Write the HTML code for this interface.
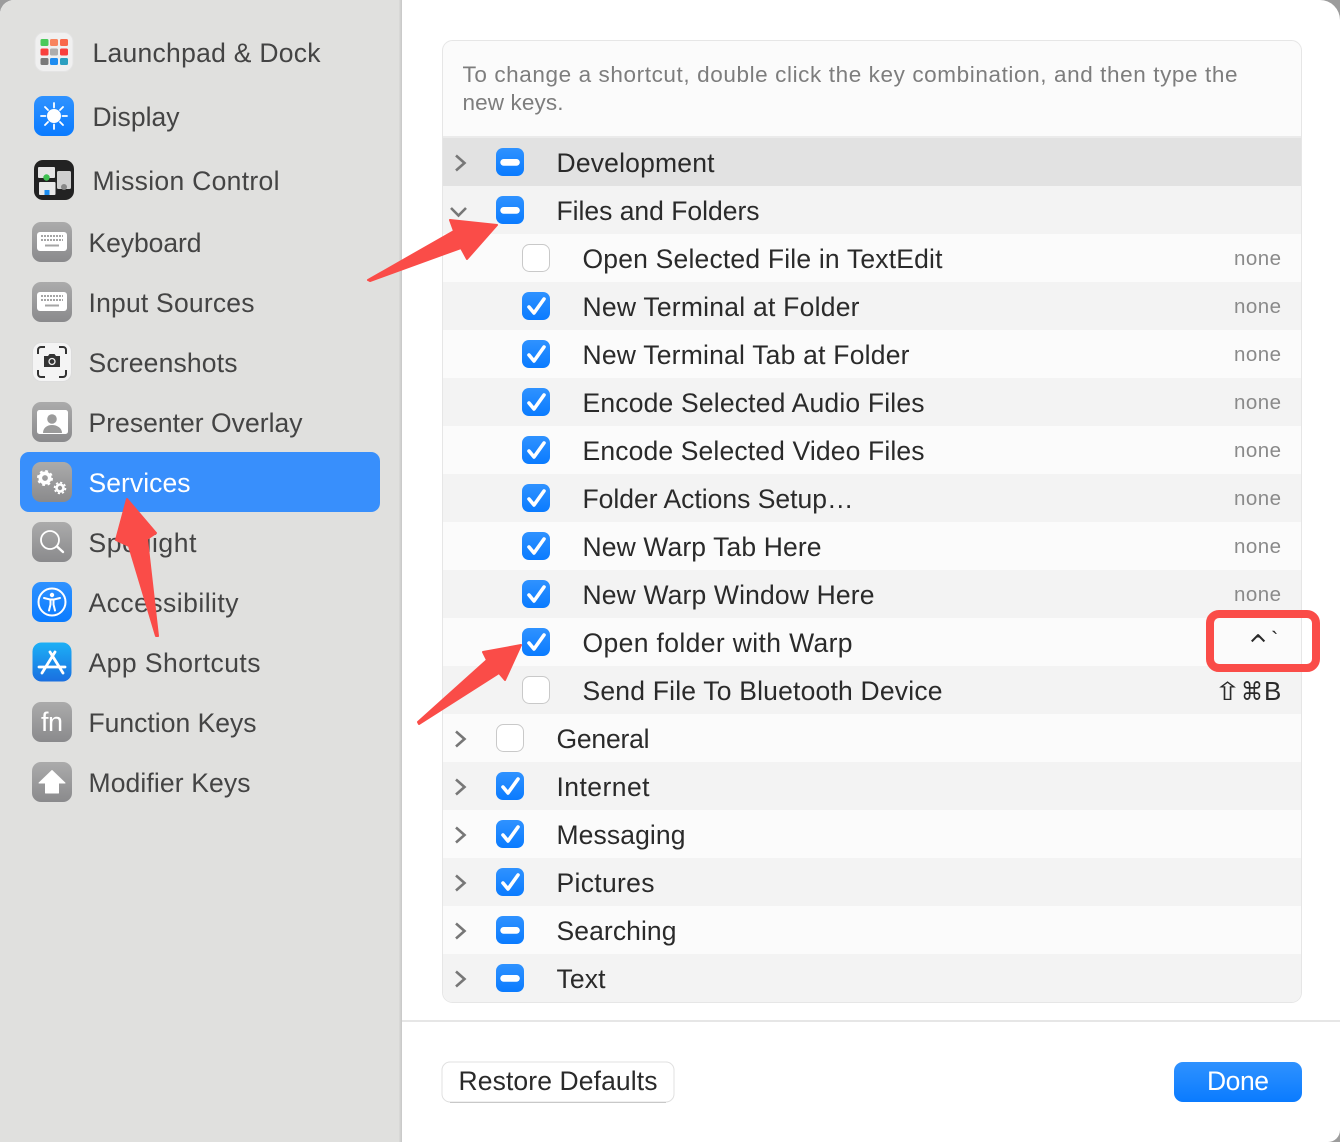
<!DOCTYPE html>
<html><head><meta charset="utf-8"><style>
html,body{margin:0;padding:0;background:#fff;width:1340px;height:1142px;overflow:hidden}
svg{display:block}
text{font-family:"Liberation Sans",sans-serif}
.s{font-size:26.5px;fill:#444}
.r{font-size:26.5px;fill:#2a2a2a}
.n{font-size:20.5px;fill:#8a8a8a}
.h{font-size:22.5px;fill:#7d7d7d}
</style></head><body>
<svg width="1340" height="1142" viewBox="0 0 1340 1142" xmlns="http://www.w3.org/2000/svg">
<defs>
<linearGradient id="b" x1="0" y1="0" x2="0" y2="1"><stop offset="0" stop-color="#2f92ff"/><stop offset="1" stop-color="#0a7bff"/></linearGradient>
<linearGradient id="g" x1="0" y1="0" x2="0" y2="1"><stop offset="0" stop-color="#ababab"/><stop offset="1" stop-color="#8a8a8c"/></linearGradient>
<linearGradient id="a" x1="0" y1="0" x2="0" y2="1"><stop offset="0" stop-color="#1cb0f6"/><stop offset="1" stop-color="#1a6fe0"/></linearGradient>
<linearGradient id="e" x1="0" y1="0" x2="1" y2="0"><stop offset="0" stop-color="#dcdcda"/><stop offset="1" stop-color="#c6c6c6"/></linearGradient>
<g id="cm"><rect width="28" height="28" rx="7" fill="url(#b)"/><rect x="4.300" y="11" width="19.500" height="6.700" rx="3.300" fill="#fff"/></g>
<g id="ck"><rect width="28" height="28" rx="7" fill="url(#b)"/><path d="M7 15l5 6 10-14" fill="none" stroke="#fff" stroke-width="3.600" stroke-linecap="round" stroke-linejoin="round"/></g>
<g id="ce"><rect x=".5" y=".5" width="27" height="27" rx="7" fill="#fff" stroke="#c9c9c9"/></g>
<path id="cr" d="M-4-7.500L4.500 0-4 7.500" fill="none" stroke="#777" stroke-width="2.600"/>
<g id="kb"><rect width="40" height="40" rx="9" fill="url(#g)"/><rect x="5" y="10" width="30" height="19" rx="3" fill="#fff"/><path d="M9 14h22M9 18h22" stroke="#a5a5a5" stroke-width="2" stroke-dasharray="2 1"/><path d="M13 23.500h14" stroke="#a5a5a5" stroke-width="2"/></g>
</defs>

<rect width="1340" height="1142" fill="#9c9c9c"/>
<path d="M14 0H1320A20 20 0 0 1 1340 20V1130A12 12 0 0 1 1328 1142H0V14A14 14 0 0 1 14 0Z" fill="#fff"/>
<path d="M14 0H402V1142H0V14A14 14 0 0 1 14 0Z" fill="#e0e0de"/>
<rect x="399" y="0" width="3" height="1142" fill="url(#e)"/>

<rect x="20" y="452" width="360" height="60" rx="9" fill="#388ffc"/>

<!-- launchpad -->
<rect x="35" y="32.500" width="38" height="39" rx="9" fill="#f0f0f0" stroke="#e4e4e4"/>
<rect x="40.500" y="39" width="8" height="7" rx="1.500" fill="#49c95a"/><rect x="50" y="39" width="8" height="7" rx="1.500" fill="#f8845f"/><rect x="60" y="39" width="8" height="7" rx="1.500" fill="#f9674a"/>
<rect x="40.500" y="48.500" width="8" height="7" rx="1.500" fill="#f9403d"/><rect x="50" y="48.500" width="8" height="7" rx="1.500" fill="#adadad"/><rect x="60" y="48.500" width="8" height="7" rx="1.500" fill="#f9403d"/>
<rect x="40.500" y="58" width="8" height="7" rx="1.500" fill="#7a7a7a"/><rect x="50" y="58" width="8" height="7" rx="1.500" fill="#1e8cf0"/><rect x="60" y="58" width="8" height="7" rx="1.500" fill="#2b9fc0"/>
<!-- display -->
<rect x="34" y="96" width="40" height="40" rx="9" fill="url(#b)"/>
<circle cx="54" cy="116" r="7" fill="#fff"/>
<path d="M54 103v4.500M54 124.500v4.500M41 116h4.500M62.500 116h4.500M45 107l3 3M60 122l3 3M45 125l3-3M60 110l3-3" stroke="#fff" stroke-width="1.800" stroke-linecap="round"/>
<!-- mission -->
<rect x="34" y="160" width="40" height="40" rx="9" fill="#222"/>
<rect x="38" y="167" width="17" height="11" rx="1" fill="#e4e4e4"/><rect x="39" y="182" width="16.500" height="13" rx="1" fill="#e8e8e8"/><rect x="57" y="171" width="14" height="18" rx="1.500" fill="#cfcfcf"/>
<circle cx="46.500" cy="177.500" r="3.200" fill="#3fc152"/><rect x="44.500" y="190" width="5" height="5" fill="#1a8cf0"/><circle cx="64" cy="187" r="3" fill="#888"/>
<!-- keyboards -->
<use href="#kb" x="32" y="222"/>
<use href="#kb" x="32" y="282"/>
<!-- screenshots -->
<rect x="32.500" y="342.500" width="39" height="39" rx="9" fill="#f4f4f4" stroke="#dcdcdc"/>
<path d="M38 354v-4a3 3 0 0 1 3-3h4M59 347h4a3 3 0 0 1 3 3v4M66 370v4a3 3 0 0 1-3 3h-4M45 377h-4a3 3 0 0 1-3-3v-4" fill="none" stroke="#333" stroke-width="2"/>
<path d="M44 356h4l1.500-2h5l1.500 2h4v11H44z" fill="#333"/><circle cx="52" cy="361.500" r="3" fill="none" stroke="#eee" stroke-width="1.300"/>
<!-- presenter -->
<rect x="32" y="402" width="40" height="40" rx="9" fill="url(#g)"/>
<rect x="37" y="410" width="31" height="24" rx="2.500" fill="#fff"/>
<circle cx="52" cy="419" r="4.800" fill="#9b9b9b"/><path d="M43 433c0-5 4-8 9-8s10 3 10 8z" fill="#9b9b9b"/>
<!-- services -->
<rect x="32" y="462" width="40" height="40" rx="9" fill="url(#g)"/>
<g fill="none" stroke="#fff">
<circle cx="45" cy="478" r="4.700" stroke-width="3.600"/><circle cx="45" cy="478" r="7" stroke-width="2" stroke-dasharray="2.800 2.700"/>
<circle cx="60" cy="488" r="3.500" stroke-width="2.600"/><circle cx="60" cy="488" r="5.500" stroke-width="1.600" stroke-dasharray="2.200 2.100"/>
</g>
<!-- spotlight -->
<rect x="32" y="522" width="40" height="40" rx="9" fill="url(#g)"/>
<circle cx="50" cy="540" r="9" fill="none" stroke="#fff" stroke-width="1.800"/><path d="M57 546.500l6 5.500" stroke="#fff" stroke-width="2.400" stroke-linecap="round"/>
<!-- accessibility -->
<rect x="32" y="582" width="40" height="40" rx="9" fill="url(#b)"/>
<circle cx="52" cy="602" r="13.500" fill="none" stroke="#fff" stroke-width="2"/>
<circle cx="52" cy="595" r="2.200" fill="#fff"/><path d="M44 598l6 1.500h4l6-1.500M50.500 599.500v5l-1.500 6M53.500 599.500v5l1.500 6" fill="none" stroke="#fff" stroke-width="2" stroke-linecap="round"/>
<!-- app store -->
<rect x="32.500" y="642.500" width="39" height="39" rx="9" fill="url(#a)"/>
<path d="M50 652l13 21M55 652l-13 21M39 667h26" stroke="#fff" stroke-width="2.800" stroke-linecap="round"/>
<!-- fn -->
<rect x="32" y="702" width="40" height="40" rx="9" fill="url(#g)"/>
<text x="41" y="731" font-size="27" fill="#fff" textLength="22" lengthAdjust="spacing">fn</text>
<!-- modifier -->
<rect x="32" y="762" width="40" height="40" rx="9" fill="url(#g)"/>
<path d="M52 770.500L65 783H58.500V793H45.500V783H39Z" fill="#fff" stroke="#fff" stroke-linejoin="round"/>

<!-- list panel -->
<rect x="442.500" y="40.500" width="859" height="962" rx="10" fill="#fbfbfb" stroke="#e6e6e6"/>
<rect x="443" y="136" width="858" height="2" fill="#ebebeb"/>
<rect x="443" y="138" width="858" height="48" fill="#e2e2e2"/>
<rect x="443" y="186" width="858" height="48" fill="#f3f3f3"/>
<rect x="443" y="282" width="858" height="48" fill="#f3f3f3"/>
<rect x="443" y="378" width="858" height="48" fill="#f3f3f3"/>
<rect x="443" y="474" width="858" height="48" fill="#f3f3f3"/>
<rect x="443" y="570" width="858" height="48" fill="#f3f3f3"/>
<rect x="443" y="666" width="858" height="48" fill="#f3f3f3"/>
<rect x="443" y="762" width="858" height="48" fill="#f3f3f3"/>
<rect x="443" y="858" width="858" height="48" fill="#f3f3f3"/>
<path d="M443 954H1301V992A10 10 0 0 1 1291 1002H453A10 10 0 0 1 443 992Z" fill="#f3f3f3"/>

<!-- chevrons -->
<use href="#cr" x="460" y="163"/>
<path d="M451 208l7.500 7.500L466 208" fill="none" stroke="#777" stroke-width="2.600"/>
<use href="#cr" x="460" y="739"/>
<use href="#cr" x="460" y="787"/>
<use href="#cr" x="460" y="835"/>
<use href="#cr" x="460" y="883"/>
<use href="#cr" x="460" y="931"/>
<use href="#cr" x="460" y="979"/>

<!-- checkboxes -->
<use href="#cm" x="496" y="148"/>
<use href="#cm" x="496" y="196"/>
<use href="#ce" x="522" y="244"/>
<use href="#ck" x="522" y="292"/>
<use href="#ck" x="522" y="340"/>
<use href="#ck" x="522" y="388"/>
<use href="#ck" x="522" y="436"/>
<use href="#ck" x="522" y="484"/>
<use href="#ck" x="522" y="532"/>
<use href="#ck" x="522" y="580"/>
<use href="#ck" x="522" y="628"/>
<use href="#ce" x="522" y="676"/>
<use href="#ce" x="496" y="724"/>
<use href="#ck" x="496" y="772"/>
<use href="#ck" x="496" y="820"/>
<use href="#ck" x="496" y="868"/>
<use href="#cm" x="496" y="916"/>
<use href="#cm" x="496" y="964"/>

<!-- footer -->
<rect x="402" y="1020" width="938" height="2" fill="#e6e6e6"/>
<rect x="442" y="1062" width="232" height="40" rx="8" fill="#fff" stroke="#e0e0e0"/>
<path d="M450 1102.500H666" stroke="#c8c8c8" stroke-width="1"/>
<rect x="1174" y="1062" width="128" height="40" rx="9" fill="url(#b)"/>
<text x="1207" y="1090" font-size="26.500" fill="#fff" textLength="62" lengthAdjust="spacing">Done</text>

<g transform="translate(-.5 0)">
<!-- sidebar text -->
<text class="s" x="93" y="62" textLength="228" lengthAdjust="spacing">Launchpad &amp; Dock</text>
<text class="s" x="93" y="126" textLength="87" lengthAdjust="spacing">Display</text>
<text class="s" x="93" y="190" textLength="187" lengthAdjust="spacing">Mission Control</text>
<text class="s" x="89" y="252" textLength="113" lengthAdjust="spacing">Keyboard</text>
<text class="s" x="89" y="312" textLength="166" lengthAdjust="spacing">Input Sources</text>
<text class="s" x="89" y="372" textLength="149" lengthAdjust="spacing">Screenshots</text>
<text class="s" x="89" y="432" textLength="214" lengthAdjust="spacing">Presenter Overlay</text>
<text class="s" x="89" y="492" textLength="102" lengthAdjust="spacing" style="fill:#fff">Services</text>
<text class="s" x="89" y="552" textLength="108" lengthAdjust="spacing">Spotlight</text>
<text class="s" x="89" y="612" textLength="150" lengthAdjust="spacing">Accessibility</text>
<text class="s" x="89" y="672" textLength="172" lengthAdjust="spacing">App Shortcuts</text>
<text class="s" x="89" y="732" textLength="168" lengthAdjust="spacing">Function Keys</text>
<text class="s" x="89" y="792" textLength="162" lengthAdjust="spacing">Modifier Keys</text>

<text class="h" x="463" y="82" textLength="775" lengthAdjust="spacing">To change a shortcut, double click the key combination, and then type the</text>
<text class="h" x="463" y="110" textLength="101" lengthAdjust="spacing">new keys.</text>

<!-- row text -->
<text class="r" x="557" y="172" textLength="158" lengthAdjust="spacing">Development</text>
<text class="r" x="557" y="220" textLength="203" lengthAdjust="spacing">Files and Folders</text>
<text class="r" x="583" y="268" textLength="360" lengthAdjust="spacing">Open Selected File in TextEdit</text>
<text class="r" x="583" y="316" textLength="277" lengthAdjust="spacing">New Terminal at Folder</text>
<text class="r" x="583" y="364" textLength="327" lengthAdjust="spacing">New Terminal Tab at Folder</text>
<text class="r" x="583" y="412" textLength="342" lengthAdjust="spacing">Encode Selected Audio Files</text>
<text class="r" x="583" y="460" textLength="342" lengthAdjust="spacing">Encode Selected Video Files</text>
<text class="r" x="583" y="508" textLength="271" lengthAdjust="spacing">Folder Actions Setup…</text>
<text class="r" x="583" y="556" textLength="239" lengthAdjust="spacing">New Warp Tab Here</text>
<text class="r" x="583" y="604" textLength="292" lengthAdjust="spacing">New Warp Window Here</text>
<text class="r" x="583" y="652" textLength="270" lengthAdjust="spacing">Open folder with Warp</text>
<text class="r" x="583" y="700" textLength="360" lengthAdjust="spacing">Send File To Bluetooth Device</text>
<text class="r" x="557" y="748" textLength="93" lengthAdjust="spacing">General</text>
<text class="r" x="557" y="796" textLength="93" lengthAdjust="spacing">Internet</text>
<text class="r" x="557" y="844" textLength="129" lengthAdjust="spacing">Messaging</text>
<text class="r" x="557" y="892" textLength="98" lengthAdjust="spacing">Pictures</text>
<text class="r" x="557" y="940" textLength="120" lengthAdjust="spacing">Searching</text>
<text class="r" x="557" y="988" textLength="49" lengthAdjust="spacing">Text</text>
<text class="r" x="459" y="1090" textLength="199" lengthAdjust="spacing">Restore Defaults</text>
</g>

<!-- none labels -->
<text class="n" x="1234" y="265" textLength="47" lengthAdjust="spacing">none</text>
<text class="n" x="1234" y="313" textLength="47" lengthAdjust="spacing">none</text>
<text class="n" x="1234" y="361" textLength="47" lengthAdjust="spacing">none</text>
<text class="n" x="1234" y="409" textLength="47" lengthAdjust="spacing">none</text>
<text class="n" x="1234" y="457" textLength="47" lengthAdjust="spacing">none</text>
<text class="n" x="1234" y="505" textLength="47" lengthAdjust="spacing">none</text>
<text class="n" x="1234" y="553" textLength="47" lengthAdjust="spacing">none</text>
<text class="n" x="1234" y="601" textLength="47" lengthAdjust="spacing">none</text>

<!-- shortcuts -->
<text x="1243" y="660" font-size="36" fill="#2a2a2a" stroke="#fbfbfb" stroke-width=".9" style="font-family:'DejaVu Sans',sans-serif">⌃</text>
<text x="1271" y="647" font-size="22" fill="#2a2a2a">`</text>
<text transform="translate(1213.500 700) scale(1.35 1)" font-size="25" fill="#2a2a2a" style="font-family:'DejaVu Sans',sans-serif">⇧</text>
<text x="1241" y="700" font-size="25" fill="#2a2a2a" textLength="22" lengthAdjust="spacingAndGlyphs" style="font-family:'DejaVu Sans',sans-serif">⌘</text>
<text x="1264" y="700" font-size="26" fill="#2a2a2a">B</text>

<!-- annotations -->
<g fill="#fa4c48" stroke="#fa4c48" stroke-width="2" stroke-linejoin="round">
<path d="M368 280L454 231 450 220 497 225 467 259 461 248 370 281Z"/>
<path d="M127 499L156 533 147 539 158 636 156 636 129 546 116 540Z"/>
<path d="M521 645L505 680 499 673 419 724 418 722 487 660 483 652Z"/>
</g>
<rect x="1210" y="614" width="106" height="54" rx="9" fill="none" stroke="#fa4c48" stroke-width="8"/>
</svg>
</body></html>
